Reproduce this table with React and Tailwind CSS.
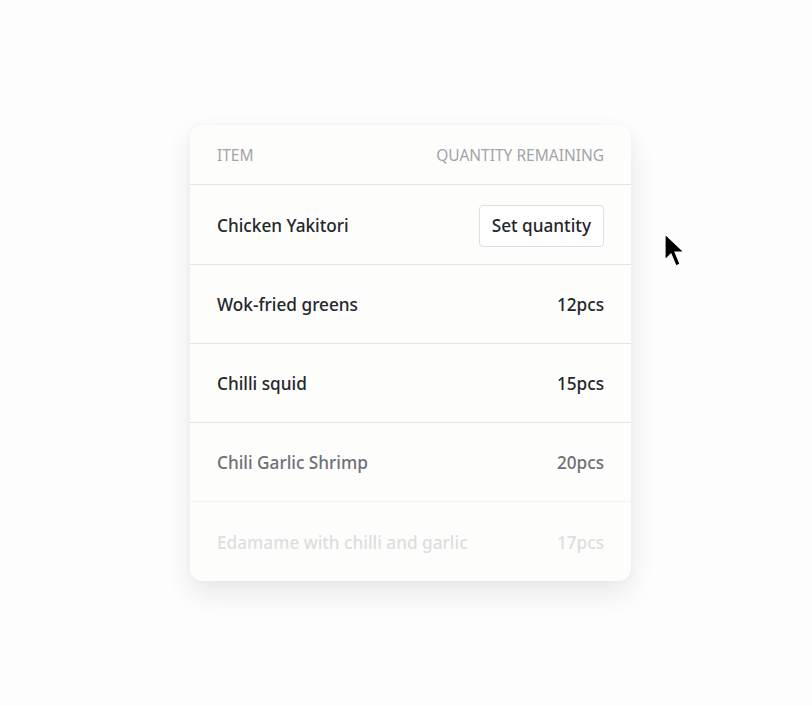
import React from 'react';

const rows = [
  { name: 'Wok-fried greens', qty: '12pcs', tone: 'text-[#23262b]' },
  { name: 'Chilli squid', qty: '15pcs', tone: 'text-[#23262b]' },
  { name: 'Chili Garlic Shrimp', qty: '20pcs', tone: 'text-[#6d7075]' },
  { name: 'Edamame with chilli and garlic', qty: '17pcs', tone: 'text-[#dcdee0]' },
];

const Cursor = () => (
  <svg className="absolute left-[663px] top-[233px]" width="24" height="38" viewBox="0 0 24 38">
    <path d="M2 1 L2 27 L8 21 L13 33 L17 31 L12 19 L21 19 Z" fill="#000" stroke="#fff" strokeWidth="1.2" strokeLinejoin="round" />
  </svg>
);

export default function App() {
  return (
    <div className="relative min-h-[706px] w-[812px] bg-[#fdfdfd] pt-[125px] pl-[190px] font-['Noto_Sans',sans-serif]">
      <div className="w-[441px] rounded-xl bg-[#fdfdfc] shadow-[0_12px_28px_rgba(0,0,0,0.09),0_0_6px_rgba(0,0,0,0.03)] overflow-hidden">
        {/* header */}
        <div className="flex h-[60px] items-center justify-between border-b border-[#e3e4e6] px-[27px] pt-[2px] text-[15.5px] uppercase text-[#a2a4a8]">
          <span>Item</span>
          <span>Quantity remaining</span>
        </div>

        <div className="flex h-[80px] items-center justify-between border-b border-[#e3e4e6] px-[27px] pt-[2px] text-[17.2px] font-medium text-[#23262b]">
          <span>Chicken Yakitori</span>
          <button className="h-[42px] rounded-[4px] border border-[#dedfe1] bg-white px-[12px] text-[17.2px] font-medium text-[#23262b]">
            Set quantity
          </button>
        </div>

        {rows.map((r, i) => (
          <div
            key={r.name}
            className={`flex h-[79px] items-center justify-between px-[27px] pt-[2px] text-[17.2px] font-medium ${r.tone} ${
              i < rows.length - 1 ? (i === 2 ? 'border-b border-[#f1f2f3]' : 'border-b border-[#e3e4e6]') : ''
            }`}
          >
            <span>{r.name}</span>
            <span>{r.qty}</span>
          </div>
        ))}
      </div>
      <Cursor />
    </div>
  );
}
